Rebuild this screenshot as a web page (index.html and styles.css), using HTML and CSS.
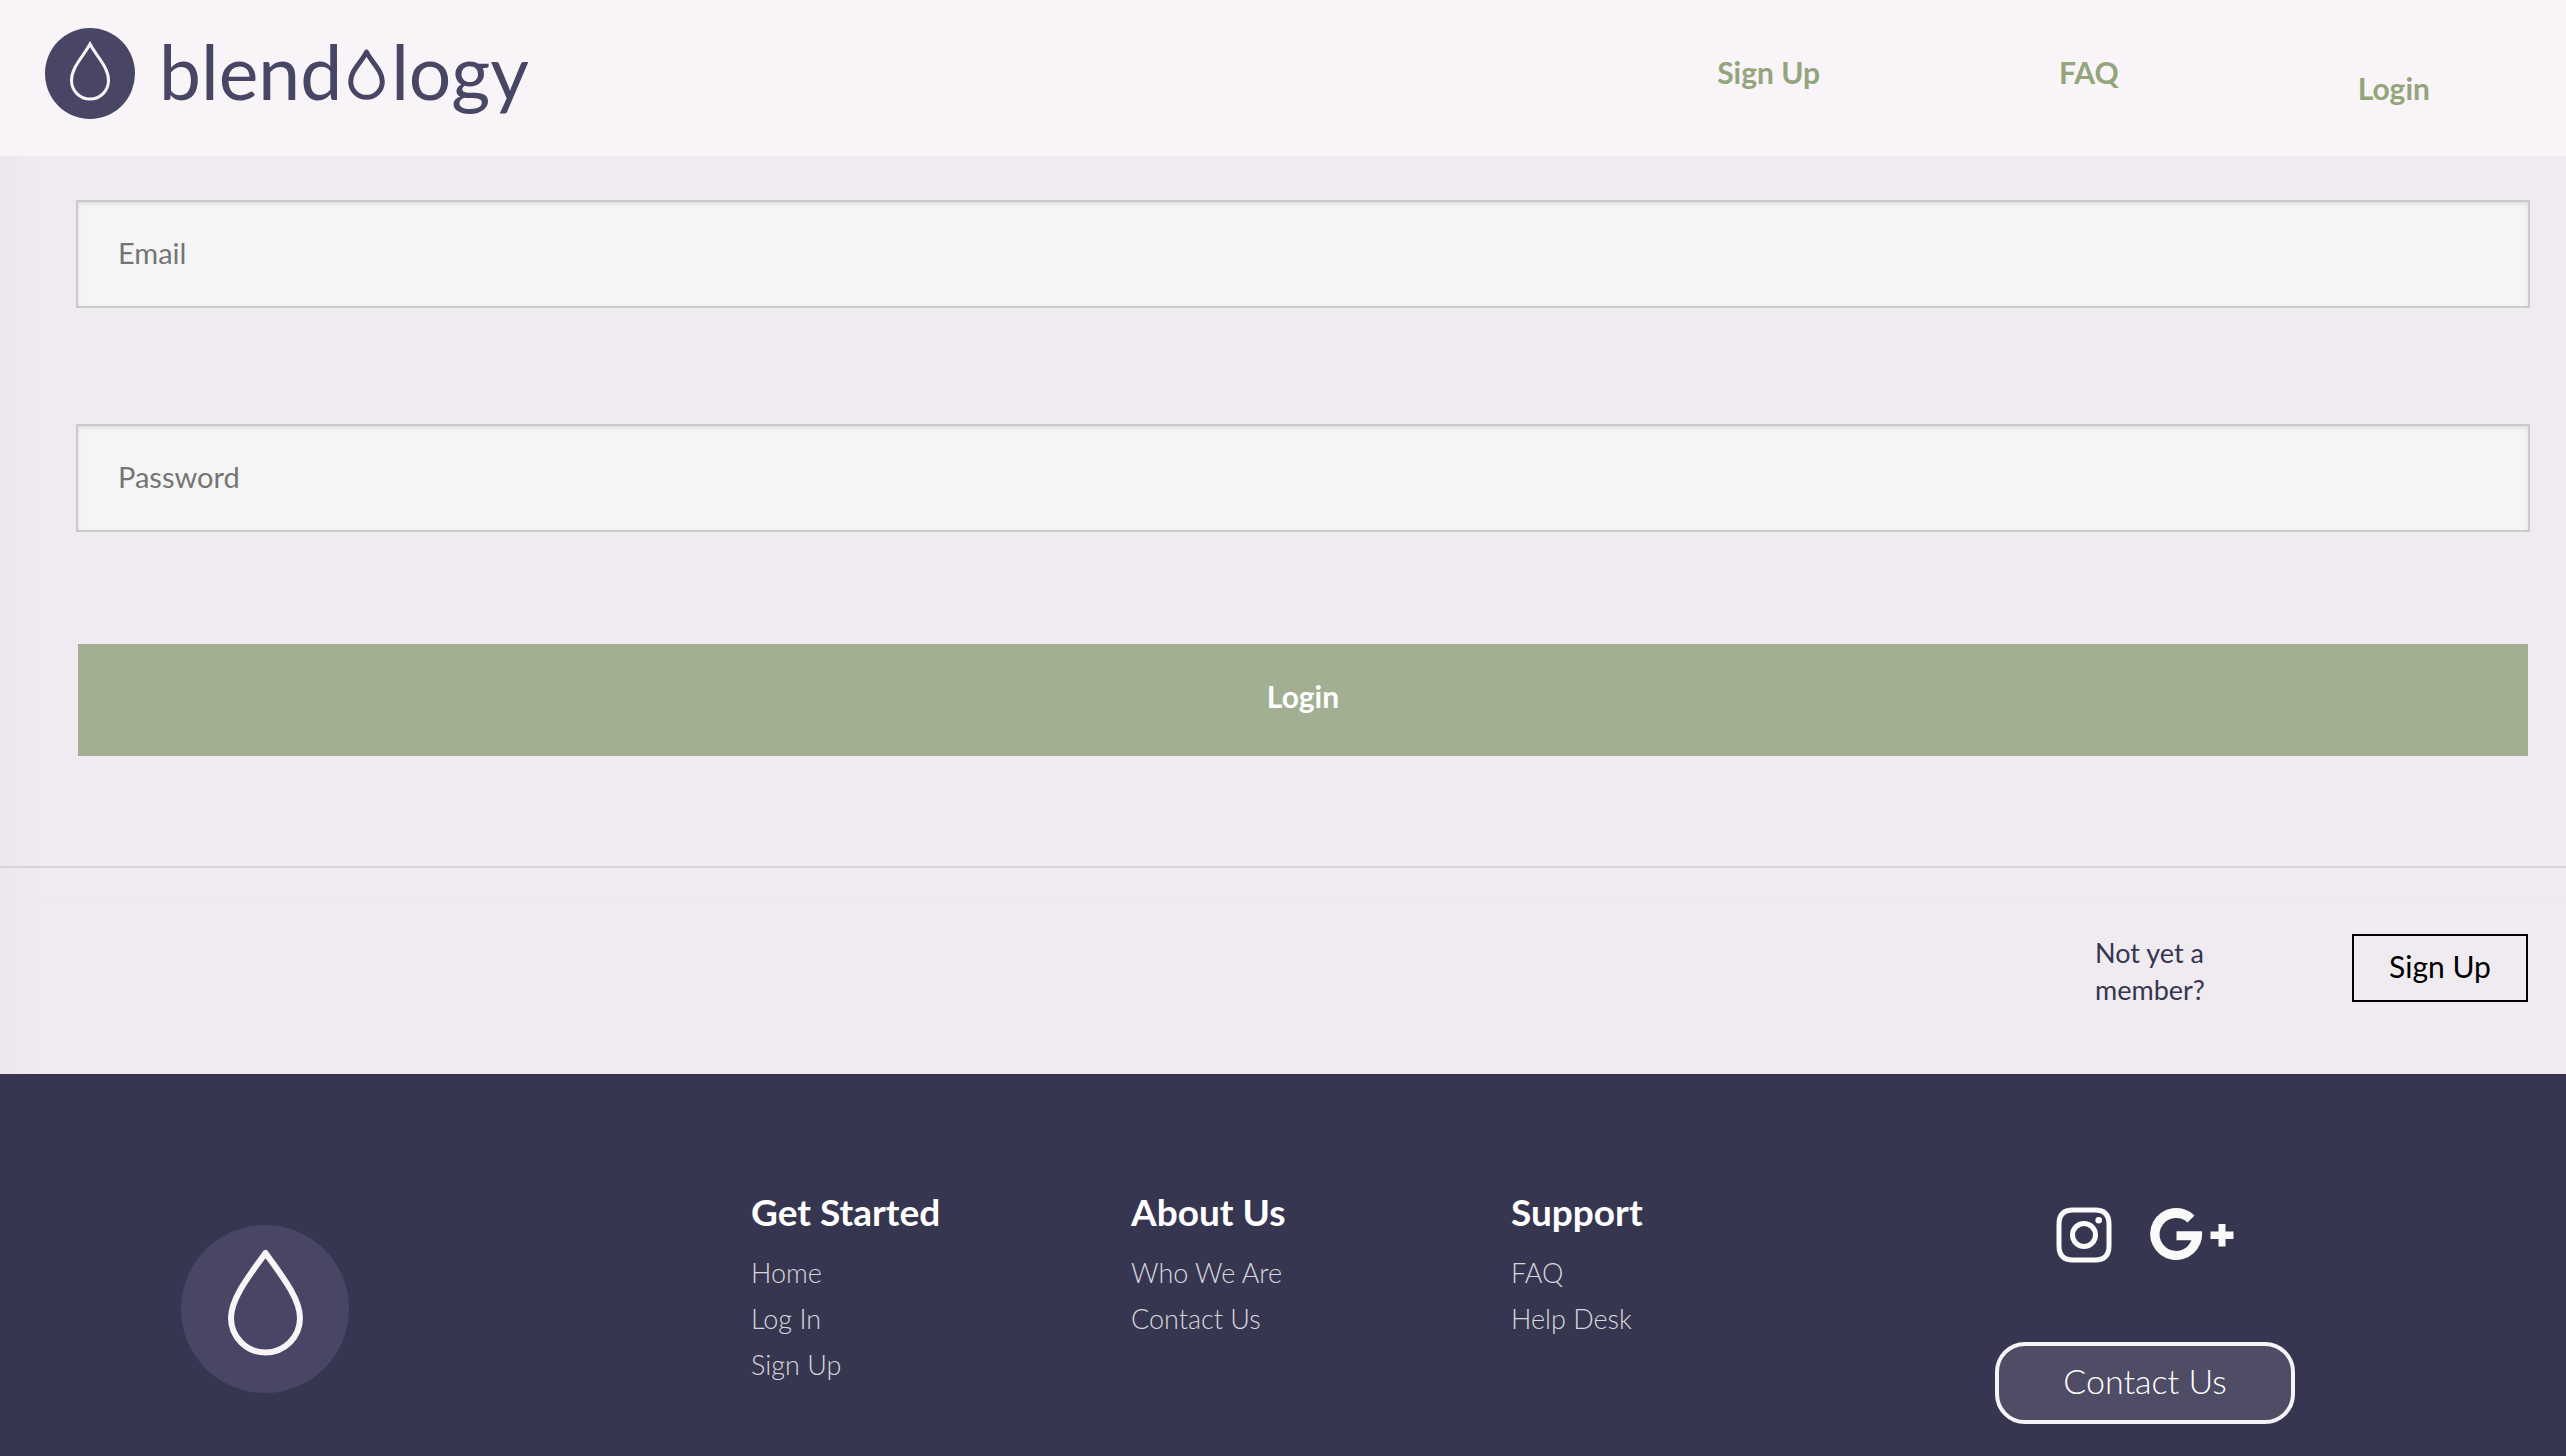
FILE: index.html
```html
<!DOCTYPE html>
<html lang="en">
<head>
<meta charset="utf-8">
<meta name="viewport" content="width=device-width, initial-scale=1">
<title>Blendology – Login</title>
<link rel="stylesheet" href="styles.css">
</head>
<body>
<header class="site-header">
  <a class="brand" href="#">
    <svg class="brand-badge" viewBox="0 0 90 91" aria-hidden="true">
      <ellipse cx="45" cy="45.500" rx="45" ry="45.500" fill="#494665"/>
      <path d="M45 16C38 29 26.500 39 26.500 52.500A18.500 18.500 0 0 0 63.500 52.500C63.500 39 52 29 45 16Z" fill="none" stroke="#f8f4f8" stroke-width="3"/>
    </svg>
    <span class="wordmark">blend<svg class="wordmark-drop" viewBox="0 0 37 51" aria-label="o" role="img"><path d="M18.500 3C13 14 2.700 21.500 2.700 32.500A15.800 15.800 0 0 0 34.300 32.500C34.300 21.500 24 14 18.500 3Z" fill="none" stroke="#494665" stroke-width="5" stroke-linejoin="round"/></svg>logy</span>
  </a>
  <nav class="main-nav">
    <a href="#">Sign Up</a>
    <a href="#">FAQ</a>
    <a class="nav-login" href="#">Login</a>
  </nav>
</header>

<main class="login">
  <form class="login-form">
    <input class="field" type="email" placeholder="Email" aria-label="Email">
    <input class="field" type="password" placeholder="Password" aria-label="Password">
    <button class="submit" type="button">Login</button>
  </form>
  <section class="join">
    <p class="join-text">Not yet a member?</p>
    <button class="join-button" type="button">Sign Up</button>
  </section>
</main>

<footer class="site-footer">
  <div class="footer-logo">
    <svg viewBox="0 0 168 168" aria-hidden="true">
      <circle cx="84" cy="84" r="84" fill="#494665"/>
      <path d="M84.500 28C72 46 50 72 50 93A34.500 34.500 0 0 0 119 93C119 72 97 46 84.500 28Z" fill="none" stroke="#f8f4f8" stroke-width="6" stroke-linejoin="round"/>
    </svg>
  </div>
  <div class="footer-column">
    <h2>Get Started</h2>
    <ul>
      <li><a href="#">Home</a></li>
      <li><a href="#">Log In</a></li>
      <li><a href="#">Sign Up</a></li>
    </ul>
  </div>
  <div class="footer-column">
    <h2>About Us</h2>
    <ul>
      <li><a href="#">Who We Are</a></li>
      <li><a href="#">Contact Us</a></li>
    </ul>
  </div>
  <div class="footer-column">
    <h2>Support</h2>
    <ul>
      <li><a href="#">FAQ</a></li>
      <li><a href="#">Help Desk</a></li>
    </ul>
  </div>
  <div class="footer-contact">
    <div class="social">
      <a href="#" aria-label="Instagram">
        <svg width="56" height="56" viewBox="0 0 56 56" fill="none" stroke="#fafafa" stroke-width="5">
          <path d="M17 3H39Q53 3 53 17V39Q53 53 39 53H17Q3 53 3 39V17Q3 3 17 3Z"/>
          <circle cx="28" cy="28" r="11.500"/>
          <circle cx="42.700" cy="13.300" r="3.300" fill="#fafafa" stroke="none"/>
        </svg>
      </a>
      <a href="#" aria-label="Google Plus">
        <svg width="84" height="56" viewBox="0 0 84 56" fill="#fafafa">
          <path d="M44.500 8.500A26 26 0 1 0 52 24.300H26.500V33.300H41.500A16.500 16.500 0 1 1 37.500 15.500Z"/>
          <path d="M68.500 17h7v7.500h8v7.500h-8v7.500h-7V32h-8v-7.500h8Z"/>
        </svg>
      </a>
    </div>
    <button class="contact-button" type="button">Contact Us</button>
  </div>
</footer>
</body>
</html>
```
FILE: styles.css
```css
* {
  box-sizing: border-box;
}

body {
  margin: 0;
  min-height: 100vh;
  display: flex;
  flex-direction: column;
  background: #efebf0;
  color: #373650;
  font-family: Lato, sans-serif;
  font-size: 30px;
}

a {
  color: inherit;
  text-decoration: none;
}

button,
input {
  font: inherit;
  border-radius: 0;
}

.site-header {
  display: flex;
  justify-content: space-between;
  align-items: flex-start;
  min-height: 156px;
  padding: 28px 136px 0 45px;
  background: #f8f4f8;
}

.brand {
  display: flex;
  align-items: center;
  gap: 24px;
  color: #494665;
}

.brand-badge {
  width: 90px;
  height: 91px;
}

.wordmark {
  padding-bottom: 4px;
  font-size: 75px;
  line-height: 85px;
}

.wordmark-drop {
  width: 37px;
  height: 51px;
  margin: 0 6px;
}

.main-nav {
  display: flex;
  gap: 239px;
  padding-top: 24px;
  color: #94a57c;
  font-weight: 700;
  line-height: 40px;
}

.nav-login {
  padding-top: 16px;
}

.login {
  background: linear-gradient(to right, #ebe7ec, #efebf0 34px);
}

.login-form {
  display: flex;
  flex-direction: column;
  padding: 44px 36px 110px 76px;
  border-bottom: 2px solid #d8d3da;
}

.field {
  height: 108px;
  margin-bottom: 116px;
  padding: 0 40px 4px;
  border: 2px solid #cacaca;
  background: #f5f5f5;
  box-shadow: inset 0 2px 4px rgba(10, 10, 10, 0.1);
  color: #373650;
  font-size: 29px;
}

.field::placeholder {
  color: #757575;
  opacity: 1;
}

.submit {
  height: 112px;
  margin: -4px 2px 0;
  padding: 0 0 8px;
  border: 0;
  background: #a2af93;
  color: #fff;
  font-weight: 700;
}

.join {
  display: flex;
  justify-content: flex-end;
  align-items: flex-start;
  gap: 120px;
  margin-top: 32px;
  padding: 32px 38px 72px;
  border-top: 2px solid #e9ebee;
}

.join-text {
  width: 137px;
  margin: 0;
  font-size: 27px;
  line-height: 37px;
}

.join-button {
  width: 176px;
  height: 68px;
  padding: 0 0 4px;
  border: 2px solid #000;
  background: none;
  color: #000;
}

.join-text,
.join-button {
  margin-bottom: -6px;
}

.site-footer {
  flex: 1;
  display: grid;
  grid-template-columns: 570fr 380fr 380fr 380fr 508fr;
  padding: 112px 167px 32px 181px;
  border-bottom: 1px solid #3a2f50;
  background: #373650;
}

.footer-logo {
  padding-top: 39px;
}

.footer-logo svg {
  display: block;
  width: 168px;
}

.footer-column h2 {
  margin: 0 0 12px;
  color: #fff;
  font-size: 37px;
  line-height: 52px;
}

.footer-column ul {
  margin: 0;
  padding: 0;
  list-style: none;
  color: #d8d7dc;
  font-size: 27px;
  font-weight: 300;
  line-height: 46px;
}

.footer-contact {
  display: flex;
  flex-direction: column;
  align-items: center;
  gap: 79px;
  padding-top: 21px;
}

.social {
  display: flex;
  gap: 38px;
}

.social svg {
  display: block;
}

.contact-button {
  width: 300px;
  height: 82px;
  padding: 0 0 6px;
  border: 4px solid #f6f4f6;
  border-radius: 30px;
  background: #4f4d65;
  color: #fff;
  font-size: 34px;
  font-weight: 300;
}
```
